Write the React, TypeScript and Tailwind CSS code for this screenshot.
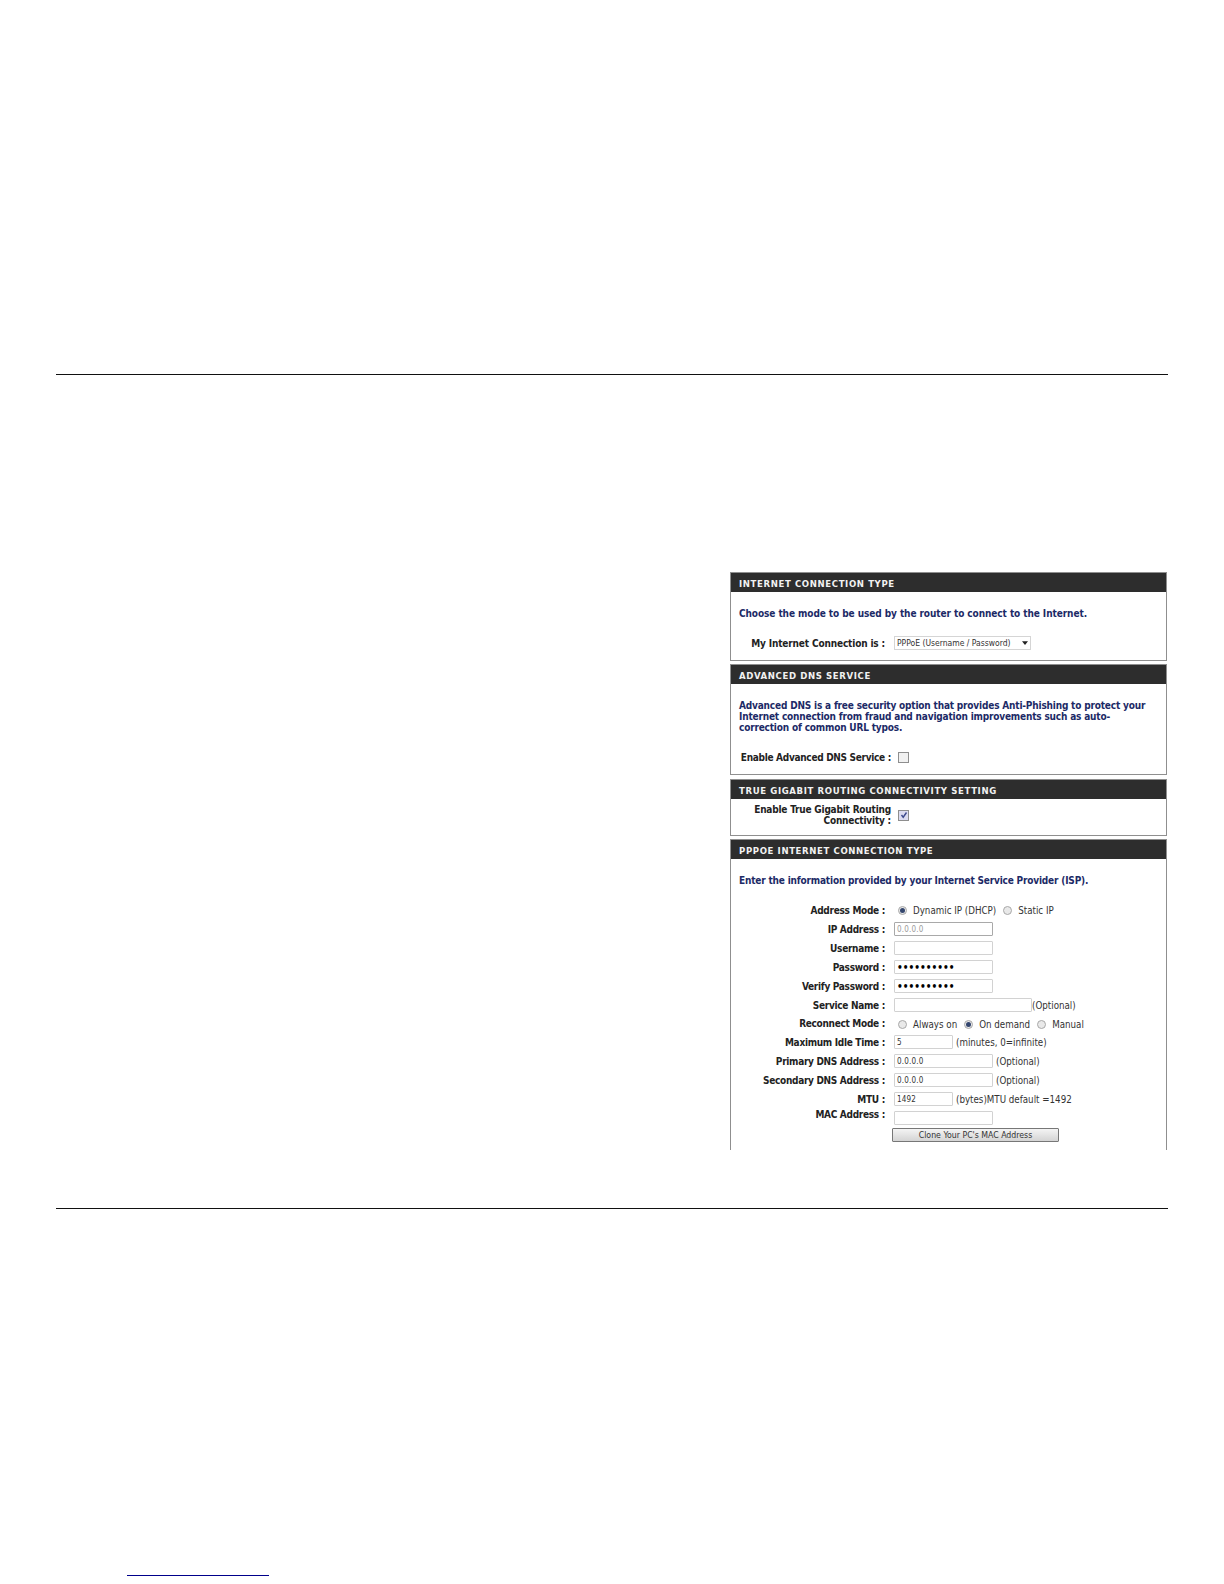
const Panel = ({ title, height, open, children }: { title: string; height: string; open?: boolean; children: React.ReactNode }) => (
  <div className={`border border-[#8f8f8f] ${open ? "border-b-0" : ""} ${height} bg-white`}>
    <div className="h-[19px] bg-[#2d2d2d] pl-[8px] text-[9.5px] leading-[21px] font-bold tracking-[0.62px] text-[#f2f2f2]">
      {title}
    </div>
    {children}
  </div>
);

const Radio = ({ on }: { on?: boolean }) => (
  <span className="flex h-[9px] w-[9px] shrink-0 items-center justify-center rounded-full border border-[#a8a8a8] bg-[#e9e9e9]">
    {on && <span className="h-[5px] w-[5px] rounded-full bg-[#34466e]" />}
  </span>
);

const Check = ({ on }: { on?: boolean }) => (
  <span className={`flex h-[11px] w-[11px] items-center justify-center border border-[#8e8e8e] ${on ? "bg-[#dcdcf0]" : "bg-[#f1f1f1]"}`}>
    {on && (
      <svg viewBox="0 0 8 8" className="h-[8px] w-[8px]">
        <path d="M1.5 4 L3.2 6.2 L6.5 1.5" fill="none" stroke="#3d4a8c" strokeWidth="1.4" />
      </svg>
    )}
  </span>
);

const Field = ({ w = "w-[99px]", value, type = "text", muted }: { w?: string; value?: string; type?: string; muted?: boolean }) => (
  <input
    type={type}
    readOnly
    value={value ?? ""}
    className={`h-[14px] ${w} rounded-[1px] border bg-white pl-[2px] outline-none ${type === "password" ? "text-[10px] font-bold text-black" : "text-[8px] tracking-[0.2px]"} ${muted ? "border-[#a9a9a9] text-[#9a9a9a]" : "border-[#d2d2d2] text-[#333]"}`}
  />
);

const Row = ({ label, mb = "mb-[5px]", labelClass = "", children }: { label: string; mb?: string; labelClass?: string; children: React.ReactNode }) => (
  <div className={`flex h-[14px] items-center ${mb}`}>
    <div className={`mr-[9px] w-[154px] text-right text-[10px] leading-[11px] font-bold tracking-[-0.3px] whitespace-nowrap text-[#222] ${labelClass}`}>
      {label} :
    </div>
    {children}
  </div>
);

const Note = ({ className, children }: { className?: string; children: React.ReactNode }) => (
  <span className={`text-[9.7px] leading-[11px] whitespace-nowrap text-[#333] ${className ?? ""}`}>{children}</span>
);

export default function App() {
  return (
    <div className="h-[1584px] w-[1224px] overflow-hidden bg-white pt-[374px] font-['DejaVu_Sans',sans-serif] font-stretch-condensed">
      <div className="ml-[56px] h-[1px] w-[1112px] bg-[#111]" />

      <div className="mt-[197px] ml-[730px] flex w-[437px] flex-col">
        <Panel title="INTERNET CONNECTION TYPE" height="h-[89px]">
          <p className="mt-[16px] pl-[8px] text-[10px] leading-[11px] font-bold tracking-[-0.08px] text-[#1c2a66]">
            Choose the mode to be used by the router to connect to the Internet.
          </p>
          <div className="mt-[17px] flex h-[14px] items-center">
            <div className="mr-[9px] w-[154px] text-right text-[10px] font-bold tracking-[-0.15px] whitespace-nowrap text-[#222]">
              My Internet Connection is :
            </div>
            <div className="relative h-[14px] w-[137px] border border-[#d5d5d5] bg-white pl-[2px] text-[8.5px] leading-[12px] text-[#333]">
              PPPoE (Username / Password)
              <svg viewBox="0 0 8 5" className="absolute top-[4px] right-[2px] h-[4px] w-[6px]">
                <path d="M0 0 H8 L4 5 Z" fill="#222" />
              </svg>
            </div>
          </div>
        </Panel>

        <div className="mt-[3px]">
          <Panel title="ADVANCED DNS SERVICE" height="h-[111px]">
            <p className="mt-[16px] pl-[8px] text-[10px] leading-[11px] font-bold tracking-[-0.18px] text-[#1c2a66]">
              Advanced DNS is a free security option that provides Anti-Phishing to protect your
              <br />
              Internet connection from fraud and navigation improvements such as auto-
              <br />
              correction of common URL typos.
            </p>
            <div className="mt-[18px] flex h-[12px] items-center">
              <div className="mr-[7px] w-[160px] text-right text-[10px] font-bold tracking-[-0.3px] whitespace-nowrap text-[#222]">
                Enable Advanced DNS Service :
              </div>
              <Check />
            </div>
          </Panel>
        </div>

        <div className="mt-[4px]">
          <Panel title="TRUE GIGABIT ROUTING CONNECTIVITY SETTING" height="h-[57px]">
            <div className="mt-[5px] flex items-center">
              <div className="mr-[7px] w-[160px] text-right text-[10px] leading-[11px] font-bold tracking-[-0.2px] text-[#222]">
                Enable True Gigabit Routing
                <br />
                Connectivity :
              </div>
              <Check on />
            </div>
          </Panel>
        </div>

        <div className="mt-[3px]">
          <Panel title="PPPOE INTERNET CONNECTION TYPE" height="h-[311px]" open>
            <p className="mt-[16px] mb-[17px] pl-[8px] text-[10px] leading-[11px] font-bold tracking-[-0.18px] text-[#1c2a66]">
              Enter the information provided by your Internet Service Provider (ISP).
            </p>
            <Row label="Address Mode">
              <span className="ml-[4px] flex items-center">
                <Radio on />
                <Note className="ml-[6px]">Dynamic IP (DHCP)</Note>
                <span className="ml-[7px]"><Radio /></span>
                <Note className="ml-[6px]">Static IP</Note>
              </span>
            </Row>
            <Row label="IP Address"><Field value="0.0.0.0" muted /></Row>
            <Row label="Username"><Field /></Row>
            <Row label="Password"><Field type="password" value="1234567890" /></Row>
            <Row label="Verify Password"><Field type="password" value="1234567890" /></Row>
            <Row label="Service Name">
              <Field w="w-[138px]" />
              <Note>(Optional)</Note>
            </Row>
            <Row label="Reconnect Mode" mb="mb-[4px]" labelClass="pb-[2px]">
              <span className="ml-[4px] flex items-center">
                <Radio />
                <Note className="ml-[6px]">Always on</Note>
                <span className="ml-[7px]"><Radio on /></span>
                <Note className="ml-[6px]">On demand</Note>
                <span className="ml-[7px]"><Radio /></span>
                <Note className="ml-[6px]">Manual</Note>
              </span>
            </Row>
            <Row label="Maximum Idle Time">
              <Field w="w-[59px]" value="5" />
              <Note className="ml-[3px]">(minutes, 0=infinite)</Note>
            </Row>
            <Row label="Primary DNS Address">
              <Field value="0.0.0.0" />
              <Note className="ml-[3px]">(Optional)</Note>
            </Row>
            <Row label="Secondary DNS Address">
              <Field value="0.0.0.0" />
              <Note className="ml-[3px]">(Optional)</Note>
            </Row>
            <Row label="MTU">
              <Field w="w-[59px]" value="1492" />
              <Note className="ml-[3px]">(bytes)MTU default =1492</Note>
            </Row>
            <div className="mb-[3px] flex h-[14px] items-start">
              <div className="mr-[9px] w-[154px] text-right text-[10px] leading-[7px] font-bold tracking-[-0.3px] whitespace-nowrap text-[#222]">
                MAC Address :
              </div>
              <Field />
            </div>
            <button className="ml-[161px] block h-[14px] w-[167px] rounded-[1px] border border-[#777] bg-gradient-to-b from-[#f4f4f4] to-[#d4d4d4] text-center text-[8.7px] leading-[12px] text-[#333]">
              Clone Your PC's MAC Address
            </button>
          </Panel>
        </div>
      </div>

      <div className="mt-[58px] ml-[56px] h-[1px] w-[1112px] bg-[#111]" />
      <div className="mt-[366px] ml-[127px] h-[1px] w-[142px] bg-[#00008b]" />
    </div>
  );
}
